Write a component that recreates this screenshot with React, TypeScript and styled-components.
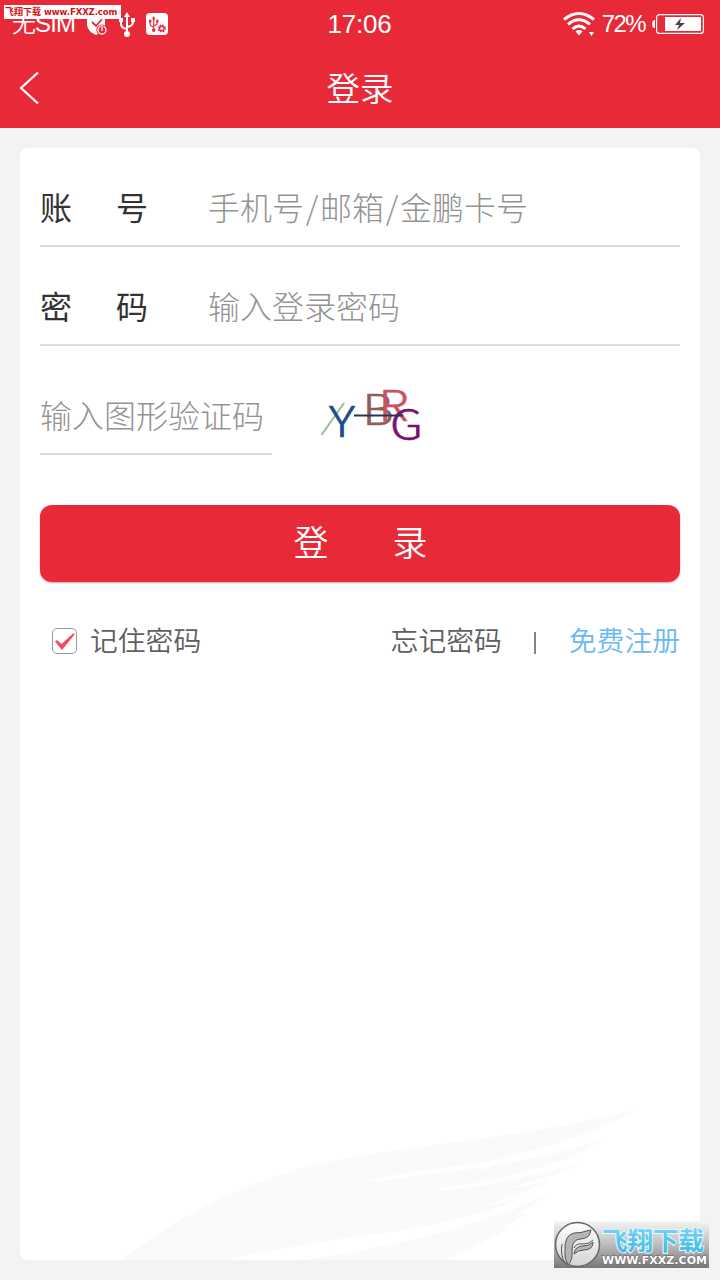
import React from "react";
import styled, { createGlobalStyle } from "styled-components";

const Global = createGlobalStyle`
  * { box-sizing: border-box; }
  html, body { margin: 0; padding: 0; background: #f3f3f3; }
  body { font-family: "Noto Sans CJK SC", sans-serif; }
`;

const Screen = styled.div`
  position: relative;
  width: 720px;
  height: 1280px;
  display: flex;
  flex-direction: column;
  background: #f3f3f3;
  overflow: hidden;
`;

const Header = styled.header`
  flex: none;
  height: 128px;
  background: #e82a38;
  color: #fff;
`;

const StatusBar = styled.div`
  height: 48px;
  display: grid;
  grid-template-columns: 1fr auto 1fr;
  align-items: center;
  padding: 0 16px 0 12px;
  font-family: "Liberation Sans", "Noto Sans CJK SC", sans-serif;
`;

const StatusGroup = styled.div<{ $end?: boolean }>`
  display: flex;
  align-items: center;
  justify-content: ${(p) => (p.$end ? "flex-end" : "flex-start")};
  height: 48px;
  svg { display: block; flex: none; }
`;

const Carrier = styled.span`
  font-size: 24px;
  line-height: 48px;
  height: 48px;
  width: 73px;
  letter-spacing: -0.9px;
  font-weight: 350;
  white-space: nowrap;
`;

const Clock = styled.span`
  font-size: 26px;
  line-height: 46px;
  letter-spacing: -0.2px;
  margin-right: 2px;
  margin-left: 5px;
`;

const Percent = styled.span`
  font-size: 24px;
  line-height: 48px;
  letter-spacing: -1.6px;
  margin: 0 7px 0 7px;
`;

const NavBar = styled.div`
  height: 80px;
  display: grid;
  grid-template-columns: 60px 1fr 60px;
  align-items: center;
  svg { display: block; margin-left: 18px; }
`;

const Title = styled.h1`
  margin: 0;
  font-size: 33.5px;
  line-height: 78px;
  height: 80px;
  font-weight: 350;
  text-align: center;
`;

const Card = styled.main`
  margin: 20px;
  flex: 1;
  display: flex;
  flex-direction: column;
  background: #fff;
  border-radius: 8px;
  overflow: hidden;
`;

const Form = styled.div`
  padding: 0 20px;
`;

const Field = styled.div<{ $height: number; $width?: string }>`
  width: ${(p) => p.$width ?? "100%"};
  height: ${(p) => p.$height}px;
  padding-bottom: 16px;
  border-bottom: 2px solid #dcdcdc;
  display: flex;
  align-items: flex-end;
  font-size: 32px;
  line-height: 46px;
`;

const Label = styled.span`
  display: flex;
  justify-content: space-between;
  width: 108px;
  margin-right: 60px;
  color: #333;
`;

const Placeholder = styled.span`
  color: #939393;
  font-weight: 300;
  white-space: nowrap;
`;

const Slash = styled.span`
  display: inline-block;
  width: 16px;
  text-align: center;
`;

const CaptchaRow = styled.div`
  display: flex;
  svg { display: block; margin: 34px 0 0 46px; overflow: visible; }
`;

const Submit = styled.button`
  display: flex;
  justify-content: center;
  gap: 64px;
  width: 100%;
  height: 77px;
  margin: 50px 0 0;
  padding: 0 0 0 1px;
  border: 0;
  border-radius: 12px;
  background: #e82a38;
  box-shadow: 0 1px 2px rgba(80, 0, 0, 0.35);
  color: #fff;
  font-family: inherit;
  font-size: 35px;
  font-weight: 350;
  line-height: 72px;
`;

const Options = styled.div`
  display: flex;
  align-items: center;
  margin-top: 37px;
  height: 40px;
  padding-left: 12px;
  font-size: 27.8px;
  font-weight: 350;
  line-height: 40px;
  color: #606060;
  white-space: nowrap;
`;

const CheckBox = styled.span`
  display: flex;
  width: 25px;
  height: 26px;
  margin: 4px 13px 0 0;
  border: 1px solid #999;
  border-radius: 5px;
  svg { display: block; }
`;

const Links = styled.div`
  display: flex;
  margin-left: auto;
`;

const Separator = styled.span`
  width: 2px;
  height: 22px;
  margin: 13px 33px 0 32px;
  background: #858585;
`;

const Register = styled.span`
  color: #6cb8f2;
`;

const Wing = styled.svg`
  display: block;
  flex: none;
  width: 680px;
  height: 170px;
  margin-top: auto;
`;

const SiteTag = styled.div`
  position: absolute;
  left: 4px;
  top: 5px;
  width: 117px;
  height: 14px;
  padding-left: 1px;
  display: flex;
  align-items: center;
  gap: 3px;
  background: #fff;
  color: #d80f12;
  font-size: 9px;
  line-height: 14px;
  font-weight: 700;
  white-space: nowrap;
`;

const TagUrl = styled.span`
  font-family: "DejaVu Sans", sans-serif;
  font-size: 8.5px;
  letter-spacing: -0.08px;
`;

const SiteBadge = styled.div`
  position: absolute;
  left: 554px;
  top: 1221px;
  width: 155px;
  height: 47px;
  svg { display: block; }
`;

const StatusIcon = styled.svg<{ $gap?: number }>`
  margin-left: ${(p) => p.$gap ?? 0}px;
`;

const UsbMark = () => (
  <g fill="none" stroke="currentColor" strokeWidth="2">
    <path d="M8 3v19M2 9v3q0 4 6 5M14 8v2q0 4-6 5" />
    <path d="M8 0l3 5H5zM0 6h4v4H0zM12 6h4v4h-4z" fill="currentColor" stroke="none" />
    <circle cx="8" cy="22" r="3" fill="currentColor" stroke="none" />
  </g>
);

export default function App() {
  return (
    <Screen>
      <Global />
      <Header>
        <StatusBar>
          <StatusGroup>
            <Carrier>无SIM</Carrier>
            <StatusIcon width="25" height="26" viewBox="0 0 25 26">
              <path d="M2 4L11 1l9 3v10q-1 7-9 10Q3 21 2 14z" fill="#fff" />
              <path d="M7 11l4 4 6-7" fill="none" stroke="#e82a38" strokeWidth="1.8" />
              <circle cx="17" cy="19" r="5.6" fill="#e82a38" />
              <circle cx="17" cy="19" r="4" fill="none" stroke="#fff" strokeWidth="1.3" />
              <path d="M17 14v6" stroke="#e82a38" strokeWidth="3" />
              <path d="M17 14v6" stroke="#fff" strokeWidth="1.2" />
            </StatusIcon>
            <StatusIcon $gap={9} width="16" height="25" viewBox="0 0 16 25">
              <UsbMark />
            </StatusIcon>
            <StatusIcon $gap={11} width="22" height="22" viewBox="0 0 22 22">
              <rect width="22" height="22" rx="4" fill="#fff" />
              <g color="#e82a38" transform="translate(3 3) scale(.59 .64)"><UsbMark /></g>
              <circle cx="15.8" cy="15.5" r="3.4" fill="none" stroke="#e82a38" strokeWidth="1.4" strokeDasharray="1.6 1.07" />
              <circle cx="15.8" cy="15.5" r="2.3" fill="none" stroke="#e82a38" strokeWidth="1.4" />
            </StatusIcon>
          </StatusGroup>
          <Clock>17:06</Clock>
          <StatusGroup $end>
            <svg width="32" height="24" viewBox="0 0 32 24">
              <g fill="none" stroke="#fff" strokeWidth="2.9">
                <path d="M1 7.5Q16-4.500 31 7.500" />
                <path d="M5 12.3Q16 3 27 12.3" />
                <path d="M9.5 17Q16 11 22.5 17" />
              </g>
              <path d="M12.5 19.3Q16 16.5 19.5 19.3L16 23.5zM26 20h5l-2.5 4z" fill="#fff" />
            </svg>
            <Percent>72%</Percent>
            <svg width="52" height="20" viewBox="0 0 52 20">
              <path d="M3 6v8H2Q0 13 0 10t2-4z" fill="#fff" />
              <rect x="4.6" y=".6" width="46.8" height="18.8" rx="3" fill="none" stroke="#fff" strokeWidth="1.2" />
              <rect x="13" y="3" width="36" height="14" fill="#fff" />
              <path d="M29 4l-6 7h4l-2 5 8-7h-5z" fill="#444" />
            </svg>
          </StatusGroup>
        </StatusBar>
        <NavBar>
          <svg width="22" height="34" viewBox="0 0 22 34">
            <path d="M20 1.5L3 17l17 15.5" fill="none" stroke="#fff" strokeWidth="2.2" />
          </svg>
          <Title>登录</Title>
        </NavBar>
      </Header>

      <Card>
        <Form>
          <Field $height={99}>
            <Label><span>账</span><span>号</span></Label>
            <Placeholder>手机号<Slash>/</Slash>邮箱<Slash>/</Slash>金鹏卡号</Placeholder>
          </Field>
          <Field $height={99}>
            <Label><span>密</span><span>码</span></Label>
            <Placeholder>输入登录密码</Placeholder>
          </Field>
          <CaptchaRow>
            <Field $height={109} $width="232px">
              <Placeholder>输入图形验证码</Placeholder>
            </Field>
            <svg width="110" height="70" viewBox="318 380 110 70" fontFamily="Noto Sans CJK SC, sans-serif" fontWeight="300">
              <path d="M321.500 435L344 403" stroke="#94bd9b" strokeWidth="2" />
              <text x="329" y="437" fontSize="43" textLength="26" lengthAdjust="spacingAndGlyphs" fill="#1c4b8b" stroke="#1c4b8b" strokeWidth=".6">Y</text>
              <text x="362.500" y="425" fontSize="42" textLength="31" lengthAdjust="spacingAndGlyphs" fill="#925c5c" stroke="#925c5c" strokeWidth=".6">B</text>
              <text x="378.500" y="421" fontSize="42" textLength="30" lengthAdjust="spacingAndGlyphs" fill="#cb5361" stroke="#cb5361" strokeWidth=".6">R</text>
              <text x="390" y="438.500" fontSize="40" textLength="33" lengthAdjust="spacingAndGlyphs" fill="#7b116d" stroke="#7b116d" strokeWidth=".5">G</text>
              <path d="M354 415.500H403" stroke="#24345a" strokeWidth="2" />
            </svg>
          </CaptchaRow>
          <Submit><span>登</span><span>录</span></Submit>
          <Options>
            <CheckBox>
              <svg width="23" height="24" viewBox="0 0 23 24">
                <path d="M2 12.500L4 11l4.500 4L20 4.500l2 .5L9 21z" fill="#f34b5c" />
              </svg>
            </CheckBox>
            <span>记住密码</span>
            <Links>
              <span>忘记密码</span>
              <Separator />
              <Register>免费注册</Register>
            </Links>
          </Options>
        </Form>
        <Wing viewBox="0 0 1523 510" preserveAspectRatio="none">
          <path
            fill="#fafafa"
            d="M228 510Q450 280 700 213C850 170 1150 140 1385 57Q1260 150 1040 218Q840 248 765 278Q830 270 1000 238Q1190 205 1310 145L1270 172L1285 170L1230 202Q1160 240 1045 272L1035 280L950 298Q1060 290 1140 256L1195 236L1130 265L1265 218L1220 242Q1120 290 1010 322L1190 270Q1100 330 980 368L1120 325Q1010 390 850 422Q620 462 460 510z"
          />
          <path fill="#fafafa" d="M630 510Q960 450 1190 308L1105 382L1140 368L1060 430L1105 408Q1030 470 950 510z" />
          <path fill="#fff" d="M936 294Q985 290 1035 275L1028 283Q970 302 940 299zM1010 240L1055 227L1045 236z" />
        </Wing>
      </Card>

      <SiteTag><span>飞翔下载</span><TagUrl>www.FXXZ.com</TagUrl></SiteTag>
      <SiteBadge>
        <svg width="155" height="47" viewBox="0 0 155 47">
          <defs>
            <linearGradient id="plate" x2="0" y2="1">
              <stop offset="0" stopColor="#f5f5f5" />
              <stop offset=".5" stopColor="#bdbdbd" />
              <stop offset="1" stopColor="#777" />
            </linearGradient>
            <linearGradient id="disc" x2="0" y2="1">
              <stop offset="0" stopColor="#fff" />
              <stop offset="1" stopColor="#d4d4d4" />
            </linearGradient>
            <linearGradient id="cyan" x2="0" y2="1">
              <stop offset=".2" stopColor="#7bd4f2" />
              <stop offset="1" stopColor="#35b5e2" />
            </linearGradient>
          </defs>
          <rect width="155" height="47" fill="url(#plate)" />
          <circle cx="23.500" cy="23.500" r="22" fill="url(#disc)" stroke="#666" strokeWidth="1.5" />
          <g fill="#b5b5b5" stroke="#555" strokeWidth="1">
            <path d="M14 44Q10 37 11 30Q10 14 20 12Q28 12 32 10L37 9Q36 18 26 18Q18 19 18 29Q19 39 14 44z" />
            <path d="M11 42Q6 34 8 23" fill="none" />
            <path d="M20 33Q21 25 29 25Q36 25 39 21Q39 29 30 29Q24 29 20 33z" />
            <path d="M20 27Q22 22 29 23Q36 23 39 19" fill="none" />
          </g>
          <text x="48" y="28.500" fontFamily="Noto Sans CJK SC, sans-serif" fontSize="25.500" fontWeight="700" textLength="102" fill="url(#cyan)" stroke="#e8f8ff" strokeWidth="2" paintOrder="stroke">飞翔下载</text>
          <text x="48" y="43" fontFamily="DejaVu Sans, sans-serif" fontSize="10.500" fontWeight="700" textLength="105" lengthAdjust="spacingAndGlyphs" fill="#fff" stroke="#666" strokeWidth="1" paintOrder="stroke">WWW.FXXZ.COM</text>
        </svg>
      </SiteBadge>
    </Screen>
  );
}
